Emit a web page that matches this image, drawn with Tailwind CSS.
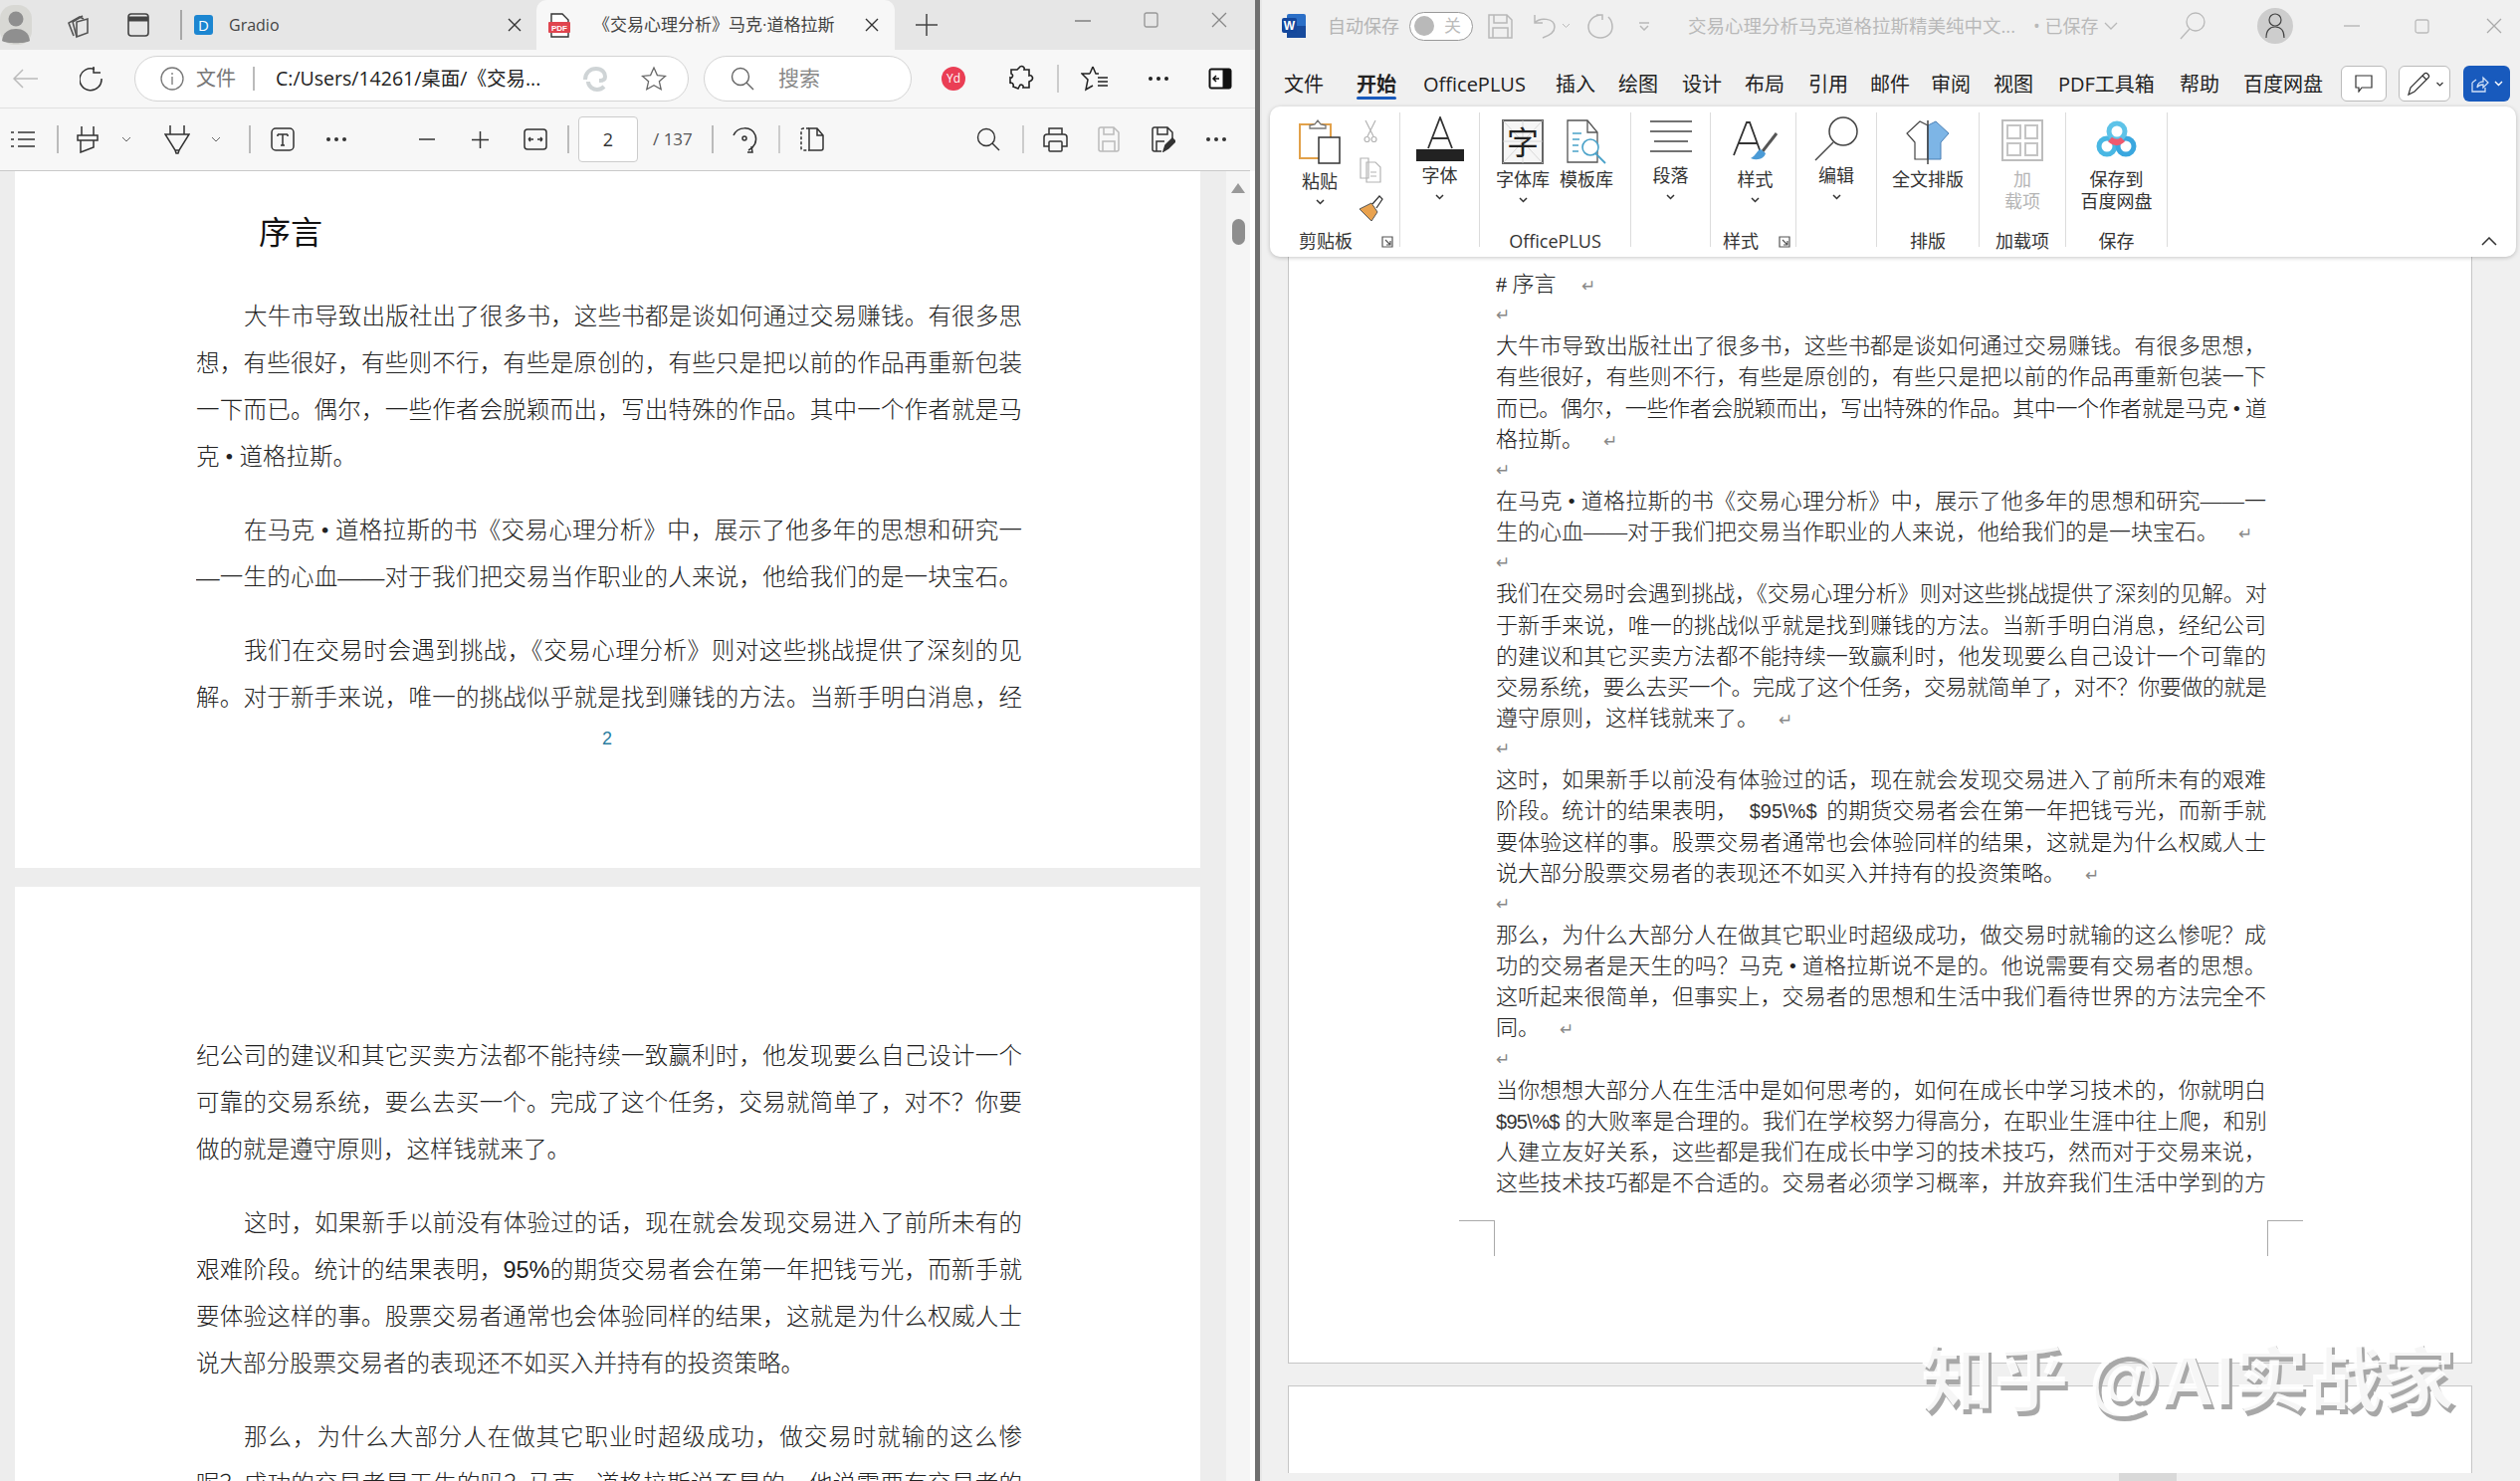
<!DOCTYPE html>
<html lang="zh-CN">
<head>
<meta charset="UTF-8" />
<title>PDF and Word side by side</title>
<script src="https://cdn.jsdelivr.net/npm/@tailwindcss/browser@4"></script>
</head>
<body class="w-[2532px] h-[1488px] overflow-hidden bg-white font-['Open_Sans','Noto_Sans_CJK_SC',sans-serif] text-[#333]">
<div class="flex h-[1488px]">

  <!-- left: edge pdf viewer -->
  <div class="w-[1261px] h-full flex flex-col bg-[#f7f7f7] shrink-0">
    <!-- tab strip -->
    <div class="h-[50px] flex items-center bg-[#e6e6e6] shrink-0">
      <div class="w-[57px] h-full flex items-center">
        <svg width="32" height="40" viewBox="0 0 32 40"><rect width="32" height="40" rx="14" fill="#d8d8d4"/><circle cx="16" cy="14" r="7.5" fill="#8f8f8f"/><path d="M2 36c1-9 7-12 14-12s13 3 14 12c-4 3-24 3-28 0z" fill="#8f8f8f"/></svg>
      </div>
      <div class="w-[40px] flex justify-center">
        <svg width="26" height="28" viewBox="0 0 26 28" fill="none" stroke="#555" stroke-width="1.6"><path d="M10 25 5 12l11-6 4 2"/><path d="M13 26 9 11l10-6"/><path d="M13 26l11-4V8l-11 3z"/></svg>
      </div>
      <div class="w-[84px] flex justify-center">
        <svg width="22" height="24" viewBox="0 0 22 24" fill="none" stroke="#444" stroke-width="1.6"><rect x="1" y="1" width="20" height="22" rx="3"/><path d="M1 6h20" stroke-width="5"/></svg>
      </div>
      <div class="w-[2px] h-[30px] bg-[#a8a8a8]"></div>
      <div class="ml-[12px] w-[19px] h-[20px] rounded-[3px] bg-[#1c86d1] text-white text-[15px] leading-[20px] text-center">D</div>
      <div class="ml-[16px] text-[16px] text-[#444] w-[280px]">Gradio</div>
      <svg width="14" height="14" viewBox="0 0 14 14" stroke="#333" stroke-width="1.4"><path d="M1 1l12 12M13 1 1 13"/></svg>
      <div class="ml-[15px] w-[360px] h-full flex items-center bg-[#f7f7f7] rounded-t-[10px]">
        <svg class="ml-[12px]" width="22" height="25" viewBox="0 0 22 25"><path d="M3 1h11l6 6v17H3z" fill="#fff" stroke="#333" stroke-width="1.4"/><rect y="9" width="22" height="11" rx="1" fill="#e0454f"/><text x="11" y="18" font-size="8" font-weight="700" text-anchor="middle" fill="#fff" font-family="Liberation Sans">PDF</text></svg>
        <div class="ml-[23px] w-[248px] text-[17px] text-[#444] whitespace-nowrap overflow-hidden">《交易心理分析》马克·道格拉斯</div>
        <svg class="ml-[25px]" width="14" height="14" viewBox="0 0 14 14" stroke="#333" stroke-width="1.4"><path d="M1 1l12 12M13 1 1 13"/></svg>
      </div>
      <svg class="ml-[21px]" width="22" height="22" viewBox="0 0 22 22" stroke="#444" stroke-width="1.5"><path d="M11 0v22M0 11h22"/></svg>
      <svg class="ml-[138px] mb-[8px]" width="16" height="2" viewBox="0 0 16 2" stroke="#999" stroke-width="2"><path d="M0 1h16"/></svg>
      <svg class="ml-[53px] mb-[10px]" width="15" height="16" viewBox="0 0 15 16" fill="none" stroke="#999" stroke-width="1.4"><rect x="1" y="1" width="13" height="14" rx="2"/></svg>
      <svg class="ml-[53px] mb-[10px]" width="16" height="16" viewBox="0 0 16 16" stroke="#888" stroke-width="1.3"><path d="M1 1l14 14M15 1 1 15"/></svg>
    </div>

    <!-- address bar -->
    <div class="h-[59px] flex items-center border-b border-[#e0e0e0] shrink-0">
      <svg class="ml-[13px]" width="25" height="20" viewBox="0 0 25 20" fill="none" stroke="#bbb" stroke-width="1.5"><path d="M25 10H1M10 1l-9 9 9 9"/></svg>
      <svg class="ml-[42px]" width="24" height="26" viewBox="0 0 24 26" fill="none" stroke="#333" stroke-width="1.5"><path d="M15 3.5A11 11 0 1 0 22 13"/><path d="M14 1v6h7"/></svg>
      <div class="ml-[31px] w-[557px] h-[46px] flex items-center bg-white border border-[#d4d4d4] rounded-full">
        <svg class="ml-[25px]" width="24" height="24" viewBox="0 0 24 24" fill="none" stroke="#777" stroke-width="1.3"><circle cx="12" cy="12" r="11"/><path d="M12 10v8M12 6v2"/></svg>
        <span class="ml-[12px] text-[20px] text-[#777]">文件</span>
        <span class="ml-[17px] w-[2px] h-[24px] bg-[#bbb]"></span>
        <span class="ml-[21px] w-[280px] text-[19.5px] text-[#222] whitespace-nowrap">C:/Users/14261/桌面/《交易...</span>
        <svg class="ml-[28px]" width="26" height="26" viewBox="0 0 26 26" fill="none" stroke="#cfd4d6" stroke-width="4"><path d="M3 14C3 7 8 3 14 3s9 4 9 8c0 3-3 4-6 4"/><path d="M6 16c0 5 5 8 9 8 3 0 5-1 7-3"/></svg>
        <svg class="ml-[33px]" width="26" height="26" viewBox="0 0 26 26" fill="none" stroke="#666" stroke-width="1.3"><path d="M13 2l3.4 7.6 8.1.8-6.1 5.4 1.8 8L13 19.7 5.800 23.800l1.800-8L1.500 10.400l8.100-.8z"/></svg>
      </div>
      <div class="ml-[15px] w-[209px] h-[46px] flex items-center bg-white border border-[#d4d4d4] rounded-full">
        <svg class="ml-[26px]" width="24" height="24" viewBox="0 0 24 24" fill="none" stroke="#666" stroke-width="1.4"><circle cx="10" cy="10" r="8.500"/><path d="M16 16l7 7"/></svg>
        <span class="ml-[24px] text-[21px] text-[#888]">搜索</span>
      </div>
      <div class="ml-[30px] w-[24px] h-[24px] rounded-full bg-[#ea3e55] text-white text-[12px] leading-[24px] text-center">Yd</div>
      <svg class="ml-[44px]" width="26" height="28" viewBox="0 0 26 28" fill="none" stroke="#222" stroke-width="1.6"><path d="M10 3c2-3 6-1 5 2h5v6c3-1 5 3 2 5l-2 1v6h-6c1-3-3-4-4-1l-1 2-5-2c1-3-2-5-3-3v-6c2 1 4-3 1-4V5h6z"/></svg>
      <div class="ml-[22px] w-[2px] h-[28px] bg-[#ccc]"></div>
      <svg class="ml-[22px]" width="28" height="28" viewBox="0 0 28 28" fill="none" stroke="#222" stroke-width="1.500"><path d="M12 2l3 7h3M9 9H1l6 6-2 10 7-4M12 2 9 9"/><path d="M17 13h10M17 17h10M17 21h10"/></svg>
      <div class="ml-[40px] flex gap-[4px]"><i class="w-[4px] h-[4px] rounded-full bg-[#222]"></i><i class="w-[4px] h-[4px] rounded-full bg-[#222]"></i><i class="w-[4px] h-[4px] rounded-full bg-[#222]"></i></div>
      <svg class="ml-[40px]" width="24" height="22" viewBox="0 0 24 22"><rect x="1" y="1" width="22" height="20" rx="2" fill="#111" stroke="#111"/><rect x="2.500" y="2.500" width="12" height="17" fill="#fff"/><path d="M11 11H5M8 8l-3 3 3 3" stroke="#111" stroke-width="1.500" fill="none"/></svg>
    </div>

    <!-- pdf toolbar -->
    <div class="h-[63px] flex items-center border-b border-[#c9c9c9] shrink-0 mr-[5px] rounded-tr-[10px]">
      <svg class="ml-[11px]" width="24" height="18" viewBox="0 0 24 18" stroke="#333" stroke-width="1.600"><path d="M7 2h17M7 9h17M7 16h17M0 2h3M0 9h3M0 16h3"/></svg>
      <div class="ml-[22px] w-[1.500px] h-[28px] bg-[#bbb]"></div>
      <svg class="ml-[18.5px]" width="22" height="28" viewBox="0 0 22 28" fill="none" stroke="#333" stroke-width="1.500"><path d="M5 1v9M17 1v9M1 10h20v5H1zM4 15v12l13-5v-7"/></svg>
      <svg class="ml-[23px]" width="10" height="6" viewBox="0 0 10 6" fill="none" stroke="#666"><path d="M1 1l4 4 4-4"/></svg>
      <svg class="ml-[33px]" width="26" height="30" viewBox="0 0 26 30" fill="none" stroke="#333" stroke-width="1.500"><path d="M6 1v9M20 1v9M1 10h24L15 26h-4zM11 26l1 3h2l1-3"/></svg>
      <svg class="ml-[21px]" width="10" height="6" viewBox="0 0 10 6" fill="none" stroke="#666"><path d="M1 1l4 4 4-4"/></svg>
      <div class="ml-[28px] w-[1.500px] h-[28px] bg-[#bbb]"></div>
      <svg class="ml-[20.5px]" width="24" height="24" viewBox="0 0 24 24" fill="none" stroke="#333" stroke-width="1.500"><rect x="1" y="1" width="22" height="22" rx="4"/><path d="M7 7h10M12 7v11M10 18h4M7 7v2M17 7v2"/></svg>
      <div class="ml-[32px] flex gap-[4px]"><i class="w-[4px] h-[4px] rounded-full bg-[#333]"></i><i class="w-[4px] h-[4px] rounded-full bg-[#333]"></i><i class="w-[4px] h-[4px] rounded-full bg-[#333]"></i></div>
      <svg class="ml-[73px]" width="16" height="2" viewBox="0 0 16 2" stroke="#333" stroke-width="1.500"><path d="M0 1h16"/></svg>
      <svg class="ml-[36.5px]" width="17" height="17" viewBox="0 0 17 17" stroke="#333" stroke-width="1.500"><path d="M0 8.500h17M8.500 0v17"/></svg>
      <svg class="ml-[35.5px]" width="24" height="22" viewBox="0 0 24 22" fill="none" stroke="#333" stroke-width="1.500"><rect x="1" y="1" width="22" height="20" rx="3"/><path d="M5 11h5M5 11l2-2M5 11l2 2M19 11h-5M19 11l-2-2M19 11l-2 2"/></svg>
      <div class="ml-[20px] w-[1.500px] h-[28px] bg-[#bbb]"></div>
      <div class="ml-[9.5px] w-[60px] h-[46px] bg-white border border-[#ccc] rounded-[4px] text-[18px] leading-[44px] text-center text-[#333]">2</div>
      <div class="ml-[15px] w-[40px] text-[17px] text-[#555] whitespace-nowrap">/ 137</div>
      <div class="ml-[19px] w-[1.500px] h-[28px] bg-[#bbb]"></div>
      <svg class="ml-[19.5px]" width="26" height="28" viewBox="0 0 26 28" fill="none" stroke="#333" stroke-width="1.500"><path d="M1 10C5 1 19 0 23 10c2 6-1 12-7 15"/><path d="M15 27h5l-1-6"/><circle cx="12" cy="13" r="2"/></svg>
      <div class="ml-[20px] w-[1.500px] h-[28px] bg-[#ccc]"></div>
      <svg class="ml-[20.5px]" width="24" height="24" viewBox="0 0 24 24" fill="none" stroke="#333" stroke-width="1.500"><path d="M9 1H3a2 2 0 0 0-2 2v18a2 2 0 0 0 2 2h6" stroke-dasharray="3 2"/><path d="M9 1h8l6 7v13a2 2 0 0 1-2 2H9zM17 1v7h6"/></svg>
      <svg class="ml-[153px]" width="24" height="24" viewBox="0 0 24 24" fill="none" stroke="#333" stroke-width="1.400"><circle cx="10" cy="10" r="8.500"/><path d="M16 16l7 7"/></svg>
      <div class="ml-[22px] w-[1.500px] h-[28px] bg-[#ccc]"></div>
      <svg class="ml-[19px]" width="25" height="26" viewBox="0 0 25 26" fill="none" stroke="#333" stroke-width="1.500"><path d="M6 8V2h13v6M6 20H1V11a3 3 0 0 1 3-3h17a3 3 0 0 1 3 3v9h-5"/><rect x="6" y="15" width="13" height="10" rx="1"/></svg>
      <svg class="ml-[30.5px]" width="22" height="26" viewBox="0 0 22 26" fill="none" stroke="#bbb" stroke-width="1.500"><path d="M1 3a2 2 0 0 1 2-2h13l5 5v17a2 2 0 0 1-2 2H3a2 2 0 0 1-2-2zM6 1v7h10V1M5 25V15h12v10"/></svg>
      <svg class="ml-[32px]" width="24" height="26" viewBox="0 0 24 26" fill="none" stroke="#333" stroke-width="1.500"><path d="M10 25H3a2 2 0 0 1-2-2V3a2 2 0 0 1 2-2h13l5 5v6M6 1v7h10V1M5 25V15h8"/><path d="M12 25l2-6 7-7 3 3-7 7z" fill="#333"/></svg>
      <div class="ml-[31px] flex gap-[4px]"><i class="w-[4px] h-[4px] rounded-full bg-[#333]"></i><i class="w-[4px] h-[4px] rounded-full bg-[#333]"></i><i class="w-[4px] h-[4px] rounded-full bg-[#333]"></i></div>
    </div>

    <!-- pdf pages -->
    <div class="flex-1 min-h-0 flex overflow-hidden bg-[#ededed]">
      <div class="w-[1232px] pl-[15px] shrink-0">
        <div class="w-[1191px] h-[700px] bg-white pt-[39px] font-['Liberation_Serif','Noto_Sans_CJK_SC',serif] font-light text-[23.5px] text-[#222]">
          <div class="ml-[245px] h-[47px] leading-[47px] text-[32px] font-normal text-[#111]">序言</div>
          <div class="mt-[37px] ml-[182px] w-[830px] [text-align-last:justify] *:h-[47px] *:leading-[47px] *:overflow-hidden">
            <div class="ml-[48px]">大牛市导致出版社出了很多书，这些书都是谈如何通过交易赚钱。有很多思</div>
            <div>想，有些很好，有些则不行，有些是原创的，有些只是把以前的作品再重新包装</div>
            <div>一下而已。偶尔，一些作者会脱颖而出，写出特殊的作品。其中一个作者就是马</div>
            <div class="[text-align-last:left]">克 • 道格拉斯。</div>
            <div class="ml-[48px] mt-[27px]">在马克 • 道格拉斯的书《交易心理分析》中，展示了他多年的思想和研究一</div>
            <div>—一生的心血——对于我们把交易当作职业的人来说，他给我们的是一块宝石。</div>
            <div class="ml-[48px] mt-[27px]">我们在交易时会遇到挑战，《交易心理分析》则对这些挑战提供了深刻的见</div>
            <div>解。对于新手来说，唯一的挑战似乎就是找到赚钱的方法。当新手明白消息，经</div>
          </div>
          <div class="mt-[5px] ml-[582px] w-[26px] h-[24px] leading-[24px] text-center text-[18px] font-['Liberation_Sans'] text-[#2a7da0]">2</div>
        </div>
        <div class="mt-[19px] w-[1191px] h-[700px] bg-white pt-[147px] font-['Liberation_Serif','Noto_Sans_CJK_SC',serif] font-light text-[23.5px] text-[#222]">
          <div class="ml-[182px] w-[830px] [text-align-last:justify] *:h-[47px] *:leading-[47px] *:overflow-hidden">
            <div>纪公司的建议和其它买卖方法都不能持续一致赢利时，他发现要么自己设计一个</div>
            <div>可靠的交易系统，要么去买一个。完成了这个任务，交易就简单了，对不？你要</div>
            <div class="[text-align-last:left]">做的就是遵守原则，这样钱就来了。</div>
            <div class="ml-[48px] mt-[27px]">这时，如果新手以前没有体验过的话，现在就会发现交易进入了前所未有的</div>
            <div>艰难阶段。统计的结果表明，<span class="font-['Liberation_Sans'] font-normal">95%</span>的期货交易者会在第一年把钱亏光，而新手就</div>
            <div>要体验这样的事。股票交易者通常也会体验同样的结果，这就是为什么权威人士</div>
            <div class="[text-align-last:left]">说大部分股票交易者的表现还不如买入并持有的投资策略。</div>
            <div class="ml-[48px] mt-[27px]">那么，为什么大部分人在做其它职业时超级成功，做交易时就输的这么惨</div>
            <div>呢？成功的交易者是天生的吗？马克 • 道格拉斯说不是的。他说需要有交易者的</div>
          </div>
        </div>
      </div>
      <div class="w-[24px] bg-[#f5f5f5] flex flex-col items-center pt-[12px]">
        <svg width="14" height="10" viewBox="0 0 14 10" fill="#999"><path d="M7 0l7 10H0z"/></svg>
        <div class="mt-[26px] w-[13px] h-[26px] rounded-full bg-[#8e8e8e]"></div>
      </div>
      <div class="flex-1 bg-white"></div>
    </div>
  </div>

  <!-- divider between windows -->
  <div class="w-[5px] bg-[#707070] shrink-0"></div>
  <div class="w-[2px] bg-[#e8e8e8] shrink-0"></div>

  <!-- right: word -->
  <div class="flex-1 h-full flex flex-col bg-[#f0f0f0] relative overflow-hidden">
    <!-- title bar -->
    <div class="h-[52px] flex items-center shrink-0">
      <svg class="ml-[20px]" width="24" height="24" viewBox="0 0 24 24"><rect x="5" width="19" height="24" rx="2" fill="#2b6fc7"/><rect x="5" y="12" width="19" height="12" fill="#174a9c"/><rect y="4" width="15" height="15" rx="2" fill="#14479c"/><text x="7.500" y="16" font-size="12" font-weight="700" text-anchor="middle" fill="#fff" font-family="Liberation Sans">W</text></svg>
      <span class="ml-[22px] text-[18px] text-[#b4b4b4] whitespace-nowrap">自动保存</span>
      <div class="ml-[10px] w-[64px] h-[29px] rounded-full border border-[#999] bg-white flex items-center">
        <span class="ml-[4px] w-[20px] h-[20px] rounded-full bg-[#b9b9b9]"></span>
        <span class="ml-[10px] text-[17px] text-[#bbb]">关</span>
      </div>
      <svg class="ml-[15px]" width="25" height="25" viewBox="0 0 25 25" fill="none" stroke="#b8b8b8" stroke-width="1.500"><path d="M1 1h18l5 5v18H1zM6 1v8h13V1M5 24V14h15v10"/></svg>
      <svg class="ml-[20px]" width="24" height="26" viewBox="0 0 24 26" fill="none" stroke="#b8b8b8" stroke-width="1.500"><path d="M2 2v8h8M2 10c5-6 20-5 20 4 0 6-6 9-12 11"/></svg>
      <svg class="ml-[5px]" width="9" height="6" viewBox="0 0 9 6" fill="none" stroke="#b8b8b8"><path d="M1 1l3.500 3.500L8 1"/></svg>
      <svg class="ml-[17px]" width="26" height="26" viewBox="0 0 26 26" fill="none" stroke="#b8b8b8" stroke-width="1.500"><path d="M14 2c-8 0-13 6-13 12s5 11 12 11 12-5 12-11-2-8-4-10M15 7V2H9"/></svg>
      <svg class="ml-[25px]" width="12" height="9" viewBox="0 0 12 9" fill="none" stroke="#b8b8b8" stroke-width="1.500"><path d="M1 1h10M2 4l4 4 4-4"/></svg>
      <span class="ml-[38px] w-[320px] text-[18.500px] text-[#b9b9b9] whitespace-nowrap">交易心理分析马克道格拉斯精美纯中文...</span>
      <span class="ml-[27px] text-[18px] text-[#b9b9b9] whitespace-nowrap">• 已保存</span>
      <svg class="ml-[6px]" width="14" height="8" viewBox="0 0 14 8" fill="none" stroke="#b9b9b9" stroke-width="1.300"><path d="M1 1l6 6 6-6"/></svg>
      <svg class="ml-[62px]" width="26" height="28" viewBox="0 0 26 28" fill="none" stroke="#b9b9b9" stroke-width="1.300"><circle cx="16" cy="10" r="9"/><path d="M10 17 1 27"/></svg>
      <div class="ml-[52px] w-[36px] h-[36px] rounded-full bg-[#cdcdcd] flex items-center justify-center">
        <svg width="20" height="26" viewBox="0 0 20 26" fill="none" stroke="#444" stroke-width="1.200"><circle cx="10" cy="7" r="6"/><path d="M1 25c0-8 4-11 9-11s9 3 9 11"/></svg>
      </div>
      <svg class="ml-[51px]" width="16" height="2" viewBox="0 0 16 2" stroke="#bbb" stroke-width="1.500"><path d="M0 1h16"/></svg>
      <svg class="ml-[55px]" width="15" height="15" viewBox="0 0 15 15" fill="none" stroke="#bbb" stroke-width="1.300"><rect x="1" y="1" width="13" height="13" rx="2"/></svg>
      <svg class="ml-[57px]" width="16" height="16" viewBox="0 0 16 16" stroke="#aaa" stroke-width="1.300"><path d="M1 1l14 14M15 1 1 15"/></svg>
    </div>

    <!-- ribbon tabs -->
    <div class="h-[55px] pt-[11px] flex items-center shrink-0 text-[20px] text-[#222] whitespace-nowrap">
      <span class="ml-[22px]">文件</span>
      <span class="ml-[33px] font-bold relative">开始<i class="absolute left-0 right-0 top-[27px] h-[3px] rounded-full bg-[#185abd]"></i></span>
      <span class="ml-[27px] w-[104px]">OfficePLUS</span>
      <span class="ml-[29px]">插入</span>
      <span class="ml-[23px]">绘图</span>
      <span class="ml-[24px]">设计</span>
      <span class="ml-[23px]">布局</span>
      <span class="ml-[24px]">引用</span>
      <span class="ml-[22px]">邮件</span>
      <span class="ml-[21px]">审阅</span>
      <span class="ml-[23px]">视图</span>
      <span class="ml-[25px] w-[97px]">PDF工具箱</span>
      <span class="ml-[25px]">帮助</span>
      <span class="ml-[24px]">百度网盘</span>
      <div class="ml-[18px] mb-[2px] w-[46px] h-[36px] bg-white border border-[#bbb] rounded-[6px] flex items-center justify-center">
        <svg width="18" height="18" viewBox="0 0 18 18" fill="none" stroke="#333" stroke-width="1.200"><path d="M1 1h16v12H7l-3 4v-4H1z"/></svg>
      </div>
      <div class="ml-[12px] mb-[2px] w-[52px] h-[36px] bg-white border border-[#bbb] rounded-[6px] flex items-center justify-center gap-[4px]">
        <svg width="26" height="26" viewBox="0 0 26 26" fill="none" stroke="#333" stroke-width="1.200"><path d="M2 24l2-7L18 3c2-2 6 2 4 4L8 21z"/><path d="M16 5l4 4"/></svg>
        <svg width="7" height="5" viewBox="0 0 7 5" fill="none" stroke="#333" stroke-width="1.200"><path d="M.5 1l3 3 3-3"/></svg>
      </div>
      <div class="ml-[13px] mb-[2px] w-[47px] h-[36px] bg-[#185abd] rounded-[6px] flex items-center justify-center gap-[5px]">
        <svg width="18" height="18" viewBox="0 0 18 18" fill="none" stroke="#cfe0f7" stroke-width="1.300"><path d="M1 8v9h13v-4M1 8l4-3M6 13c0-4 3-6 6-6V3l5 5-5 5v-3c-3 0-5 1-6 3z"/></svg>
        <svg width="9" height="6" viewBox="0 0 9 6" fill="none" stroke="#fff" stroke-width="1.400"><path d="M1 1l3.500 3.500L8 1"/></svg>
      </div>
    </div>

    <!-- ribbon -->
    <div class="relative z-10 ml-[8px] w-[1252px] h-[151px] shrink-0 bg-white rounded-[10px] shadow-[0_1px_4px_rgba(0,0,0,0.22)] pt-[6px] flex text-[18px] leading-[22px] text-[#333] whitespace-nowrap">
      <!-- clipboard -->
      <div class="w-[131px] h-[135px] border-r border-[#dcdcdc] flex flex-col">
        <div class="flex-1 flex pl-[8px] pt-[7px]">
          <div class="w-[84px] flex flex-col items-center">
            <svg width="42" height="45" viewBox="0 0 42 45"><path d="M6 5h26v34H1V5z" fill="#fff" stroke="#e2a14a" stroke-width="2"/><path d="M11 6l5-1 3-4 3 4 5 1v3H11z" fill="#fff" stroke="#777" stroke-width="1.300"/><rect x="20" y="18" width="21" height="26" fill="#fff" stroke="#333" stroke-width="1.500"/></svg>
            <div class="mt-[6px] h-[22px]">粘贴</div>
            <svg class="mt-[7px]" width="9" height="6" viewBox="0 0 9 6" fill="none" stroke="#333" stroke-width="1.500"><path d="M1 1l3.500 3.500L8 1"/></svg>
          </div>
          <div class="w-[18px] flex flex-col items-center">
            <svg class="shrink-0" width="14" height="24" viewBox="0 0 14 24" fill="none" stroke="#b4b4b4" stroke-width="1.200"><path d="M2 1l8 16M12 1 4 17"/><circle cx="3.500" cy="20" r="2.500"/><circle cx="10.500" cy="20" r="2.500"/></svg>
            <svg class="mt-[14px] shrink-0" width="22" height="26" viewBox="0 0 22 26" fill="none" stroke="#b4b4b4" stroke-width="1.200"><path d="M1 1h8v20H1zM7 5h9l5 5v15H7zM11 15h6M11 19h6"/></svg>
            <svg class="mt-[11px] shrink-0" width="26" height="28" viewBox="0 0 26 28"><path d="M2 15l12-6 6 9-6 9z" fill="#e9a24e" stroke="#555" stroke-width="1"/><path d="M15 10l7-8 3 3-6 9" fill="#fff" stroke="#333" stroke-width="1.200"/></svg>
          </div>
        </div>
        <div class="h-[16px] flex pl-[29px] text-[18px] leading-[20px]">剪贴板
          <svg class="ml-[29px] mt-[5px] shrink-0" width="12" height="12" viewBox="0 0 12 12" fill="none" stroke="#555" stroke-width="1.200"><path d="M11 11V1H1v10zM4 4l5 5M9 5v4H5"/></svg>
        </div>
      </div>
      <!-- font -->
      <div class="w-[80px] h-[135px] border-r border-[#dcdcdc] flex flex-col items-center pt-[4px]">
        <svg width="48" height="45" viewBox="0 0 48 45"><path d="M12 32 24 1l12 31M16 22h16" fill="none" stroke="#333" stroke-width="1.800"/><rect y="33" width="48" height="12" fill="#222"/></svg>
        <div class="mt-[3px] h-[22px]">字体</div>
        <svg class="mt-[8px]" width="9" height="6" viewBox="0 0 9 6" fill="none" stroke="#333" stroke-width="1.500"><path d="M1 1l3.500 3.500L8 1"/></svg>
      </div>
      <!-- officeplus -->
      <div class="w-[152px] h-[135px] border-r border-[#dcdcdc] flex flex-col">
        <div class="flex-1 flex gap-[4px] pl-[13px] pt-[7px]">
          <div class="w-[60px] flex flex-col items-center">
            <svg width="42" height="45" viewBox="0 0 42 45"><rect x="1" y="1" width="40" height="43" fill="#f6f6f6" stroke="#666" stroke-width="2"/><path d="M1 1l40 43M41 1 1 44M21 1v43M1 22h40" stroke="#ccc" stroke-width="0.700"/><text x="21" y="35" font-size="32" text-anchor="middle" fill="#222" font-family="Noto Sans CJK SC">字</text></svg>
            <div class="mt-[4px] h-[22px]">字体库</div>
            <svg class="mt-[7px]" width="9" height="6" viewBox="0 0 9 6" fill="none" stroke="#333" stroke-width="1.500"><path d="M1 1l3.500 3.500L8 1"/></svg>
          </div>
          <div class="w-[60px] flex flex-col items-center">
            <svg width="42" height="45" viewBox="0 0 42 45" fill="none"><path d="M2 1h20l10 12v30H2z" fill="#fff" stroke="#555" stroke-width="1.300"/><path d="M22 1v12h10" stroke="#555" stroke-width="1.300"/><path d="M7 14h9M7 20h7M7 26h6M7 32h6" stroke="#4aa2c9" stroke-width="1.500"/><circle cx="25" cy="28" r="8" fill="#fff" stroke="#4aa2c9" stroke-width="1.600"/><path d="M30 34l10 10" stroke="#4aa2c9" stroke-width="1.800"/></svg>
            <div class="mt-[4px] h-[22px]">模板库</div>
          </div>
        </div>
        <div class="h-[16px] text-center text-[18px] leading-[20px]">OfficePLUS</div>
      </div>
      <!-- paragraph -->
      <div class="w-[80px] h-[135px] border-r border-[#dcdcdc] flex flex-col items-center pt-[4px]">
        <svg width="42" height="45" viewBox="0 0 42 45" stroke="#444" stroke-width="1.300"><path d="M0 5h42M0 15h42M4 25h34M0 35h42"/></svg>
        <div class="mt-[3px] h-[22px]">段落</div>
        <svg class="mt-[8px]" width="9" height="6" viewBox="0 0 9 6" fill="none" stroke="#333" stroke-width="1.500"><path d="M1 1l3.500 3.500L8 1"/></svg>
      </div>
      <!-- styles -->
      <div class="w-[86px] h-[135px] border-r border-[#dcdcdc] flex flex-col">
        <div class="flex-1 flex flex-col items-center pt-[7px] pl-[4px]">
          <svg width="46" height="45" viewBox="0 0 46 45"><path d="M1 36 14 3h3l12 33M6 24h18" fill="none" stroke="#333" stroke-width="1.800"/><path d="M44 14 30 32" stroke="#555" stroke-width="3"/><path d="M28 30c-4 1-4 6-10 9 7 3 14 0 15-5z" fill="#4b9bd6"/></svg>
          <div class="mt-[4px] h-[22px]">样式</div>
          <svg class="mt-[7px]" width="9" height="6" viewBox="0 0 9 6" fill="none" stroke="#333" stroke-width="1.500"><path d="M1 1l3.500 3.500L8 1"/></svg>
        </div>
        <div class="h-[16px] flex pl-[12px] text-[18px] leading-[20px]">样式
          <svg class="ml-[20px] mt-[5px] shrink-0" width="12" height="12" viewBox="0 0 12 12" fill="none" stroke="#555" stroke-width="1.200"><path d="M11 11V1H1v10zM4 4l5 5M9 5v4H5"/></svg>
        </div>
      </div>
      <!-- edit -->
      <div class="w-[81px] h-[135px] border-r border-[#dcdcdc] flex flex-col items-center pt-[4px]">
        <svg width="44" height="45" viewBox="0 0 44 45" fill="none" stroke="#444" stroke-width="1.500"><circle cx="29" cy="15" r="14"/><path d="M19 26 1 44"/></svg>
        <div class="mt-[3px] h-[22px]">编辑</div>
        <svg class="mt-[8px]" width="9" height="6" viewBox="0 0 9 6" fill="none" stroke="#333" stroke-width="1.500"><path d="M1 1l3.500 3.500L8 1"/></svg>
      </div>
      <!-- layout -->
      <div class="w-[103px] h-[135px] border-r border-[#dcdcdc] flex flex-col items-center pt-[7px]">
        <svg width="44" height="45" viewBox="0 0 44 45"><path d="M22 6 14 2 1 14l8 9v17h13z" fill="#fff" stroke="#444" stroke-width="1.200"/><path d="M22 6l8-4 13 12-8 9v17H22z" fill="#7db5e6" stroke="#4a7fb5" stroke-width="1"/><path d="M22 1v44" stroke="#444" stroke-width="1.500"/></svg>
        <div class="mt-[4px] h-[22px] flex-1">全文排版</div>
        <div class="h-[16px] leading-[20px]">排版</div>
      </div>
      <!-- addins -->
      <div class="w-[87px] h-[135px] border-r border-[#dcdcdc] flex flex-col items-center pt-[7px]">
        <div class="w-[42px] h-[42px] p-[3px] border-2 border-[#bdbdbd] grid grid-cols-2 gap-[3px]">
          <i class="border-2 border-[#c4c4c4]"></i><i class="border-2 border-[#c4c4c4]"></i><i class="border-2 border-[#c4c4c4]"></i><i class="border-2 border-[#c4c4c4]"></i>
        </div>
        <div class="mt-[7px] h-[22px] text-[#b5b5b5]">加</div>
        <div class="h-[23px] flex-1 text-[#b5b5b5]">载项</div>
        <div class="h-[16px] leading-[20px]">加载项</div>
      </div>
      <!-- baidu -->
      <div class="w-[102px] h-[135px] border-r border-[#dcdcdc] flex flex-col items-center pt-[7px]">
        <svg width="42" height="42" viewBox="0 0 42 42" fill="none" stroke-width="5"><circle cx="11" cy="27" r="8" stroke="#49b7e3"/><circle cx="30" cy="27" r="8" stroke="#3aa7df"/><circle cx="21" cy="12" r="8" stroke="#5ec3e8"/><path d="M14 20q7 6 13 0" stroke="#ef5a6f" stroke-width="6"/></svg>
        <div class="mt-[7px] h-[22px]">保存到</div>
        <div class="h-[23px] flex-1">百度网盘</div>
        <div class="h-[16px] leading-[20px]">保存</div>
      </div>
      <div class="flex-1 flex justify-end items-end pr-[19px]">
        <svg class="mb-[11px]" width="16" height="9" viewBox="0 0 16 9" fill="none" stroke="#333" stroke-width="1.500"><path d="M1 8l7-7 7 7"/></svg>
      </div>
    </div>

    <!-- document -->
    <div class="flex-1 min-h-0 pl-[26px] overflow-hidden">
      <div class="w-[1190px] h-[1112px] bg-white border-x border-b border-[#c6c6c6] pl-[208px] pt-[12px] font-['Liberation_Serif','Noto_Sans_CJK_SC',serif] font-light text-[22px] text-[#222]">
        <div class="w-[774px] [text-align-last:justify] *:h-[31.150px] *:leading-[31px] *:overflow-hidden">
          <div class="[text-align-last:left]"># 序言 <span class="ml-[20px] font-['DejaVu_Sans'] text-[17px] text-[#888]">↵</span></div>
          <div class="[text-align-last:left] font-['DejaVu_Sans'] text-[17px] text-[#888]">↵</div>
          <div>大牛市导致出版社出了很多书，这些书都是谈如何通过交易赚钱。有很多思想，</div>
          <div>有些很好，有些则不行，有些是原创的，有些只是把以前的作品再重新包装一下</div>
          <div class="tracking-[-0.7px]">而已。偶尔，一些作者会脱颖而出，写出特殊的作品。其中一个作者就是马克 • 道</div>
          <div class="[text-align-last:left]">格拉斯。<span class="ml-[20px] font-['DejaVu_Sans'] text-[17px] text-[#888]">↵</span></div>
          <div class="[text-align-last:left] font-['DejaVu_Sans'] text-[17px] text-[#888]">↵</div>
          <div>在马克 • 道格拉斯的书《交易心理分析》中，展示了他多年的思想和研究——一</div>
          <div class="[text-align-last:left]">生的心血——对于我们把交易当作职业的人来说，他给我们的是一块宝石。<span class="ml-[20px] font-['DejaVu_Sans'] text-[17px] text-[#888]">↵</span></div>
          <div class="[text-align-last:left] font-['DejaVu_Sans'] text-[17px] text-[#888]">↵</div>
          <div class="tracking-[-0.7px]">我们在交易时会遇到挑战，《交易心理分析》则对这些挑战提供了深刻的见解。对</div>
          <div>于新手来说，唯一的挑战似乎就是找到赚钱的方法。当新手明白消息，经纪公司</div>
          <div>的建议和其它买卖方法都不能持续一致赢利时，他发现要么自己设计一个可靠的</div>
          <div class="tracking-[-0.7px]">交易系统，要么去买一个。完成了这个任务，交易就简单了，对不？你要做的就是</div>
          <div class="[text-align-last:left]">遵守原则，这样钱就来了。<span class="ml-[20px] font-['DejaVu_Sans'] text-[17px] text-[#888]">↵</span></div>
          <div class="[text-align-last:left] font-['DejaVu_Sans'] text-[17px] text-[#888]">↵</div>
          <div>这时，如果新手以前没有体验过的话，现在就会发现交易进入了前所未有的艰难</div>
          <div>阶段。统计的结果表明， <span class="ml-[6px] mr-[4px] text-[20px] font-['Liberation_Sans'] font-normal text-[#333]">$95\%$</span> 的期货交易者会在第一年把钱亏光，而新手就</div>
          <div>要体验这样的事。股票交易者通常也会体验同样的结果，这就是为什么权威人士</div>
          <div class="[text-align-last:left]">说大部分股票交易者的表现还不如买入并持有的投资策略。<span class="ml-[20px] font-['DejaVu_Sans'] text-[17px] text-[#888]">↵</span></div>
          <div class="[text-align-last:left] font-['DejaVu_Sans'] text-[17px] text-[#888]">↵</div>
          <div>那么，为什么大部分人在做其它职业时超级成功，做交易时就输的这么惨呢？成</div>
          <div>功的交易者是天生的吗？马克 • 道格拉斯说不是的。他说需要有交易者的思想。</div>
          <div>这听起来很简单，但事实上，交易者的思想和生活中我们看待世界的方法完全不</div>
          <div class="[text-align-last:left]">同。<span class="ml-[20px] font-['DejaVu_Sans'] text-[17px] text-[#888]">↵</span></div>
          <div class="[text-align-last:left] font-['DejaVu_Sans'] text-[17px] text-[#888]">↵</div>
          <div>当你想想大部分人在生活中是如何思考的，如何在成长中学习技术的，你就明白</div>
          <div class="tracking-[-0.7px]"><span class="text-[20px] font-['Liberation_Sans'] font-normal text-[#333]">$95\%$</span> 的大败率是合理的。我们在学校努力得高分，在职业生涯中往上爬，和别</div>
          <div>人建立友好关系，这些都是我们在成长中学习的技术技巧，然而对于交易来说，</div>
          <div>这些技术技巧都是不合适的。交易者必须学习概率，并放弃我们生活中学到的方</div>
        </div>
        <div class="mt-[22px] -ml-[37px] w-[848px] h-[36px] flex justify-between">
          <div class="w-[36px] border-t border-r border-[#aaa]"></div>
          <div class="w-[36px] border-t border-l border-[#aaa]"></div>
        </div>
      </div>
      <div class="mt-[22px] w-[1190px] h-[200px] bg-white border border-[#c6c6c6]"></div>
    </div>

    <!-- status bar, cut off by the bottom edge -->
    <div class="h-[8px] shrink-0 bg-[#f0f0f0] flex">
      <div class="ml-[861px] w-[58px] bg-[#d9d9d9]"></div>
    </div>

    <!-- site watermark -->
    <div class="absolute left-[662px] top-[1336px] text-[74px] leading-[100px] font-bold text-white/90 whitespace-nowrap [text-shadow:3px_5px_0_#a8a8a8] font-['Liberation_Sans','Noto_Sans_CJK_SC',sans-serif]">知乎 @AI实战家</div>
  </div>
</div>
</body>
</html>
